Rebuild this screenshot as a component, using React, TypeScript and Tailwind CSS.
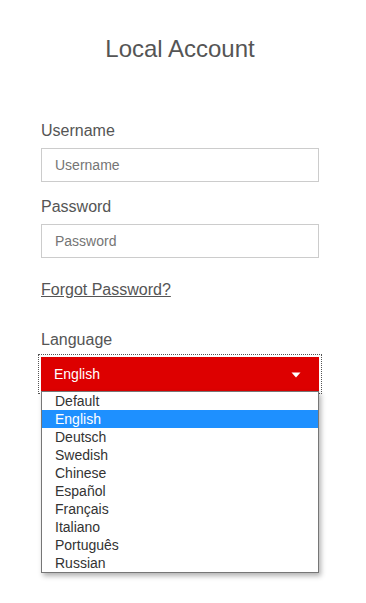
import { useState } from 'react'

const languages = ['Default', 'English', 'Deutsch', 'Swedish', 'Chinese', 'Español', 'Français', 'Italiano', 'Português', 'Russian']

export default function App() {
  const [selected, setSelected] = useState('English')

  return (
    <div className="min-h-[603px] w-full bg-white font-['Liberation_Sans',Arial,sans-serif] text-[#555]">
      <div className="ml-[41px] w-[278px] pt-[33px] pb-10">
        <h1 className="text-center text-[24px] leading-8 text-[#555]">Local Account</h1>

        <div className="mt-[54px]">
          <label className="block text-[16px] leading-6">Username</label>
          <input
            type="text"
            placeholder="Username"
            className="mt-[5px] block h-[34px] w-full border border-[#ccc] px-[13px] text-[14px] text-[#555] placeholder:text-[#757575] outline-none"
          />
        </div>

        <div className="mt-[13px]">
          <label className="block text-[16px] leading-6">Password</label>
          <input
            type="password"
            placeholder="Password"
            className="mt-[5px] block h-[34px] w-full border border-[#ccc] px-[13px] text-[14px] text-[#555] placeholder:text-[#757575] outline-none"
          />
        </div>

        <a href="#" className="mt-5 inline-block text-[16px] leading-6 text-[#555] underline">
          Forgot Password?
        </a>

        <div className="mt-[26px]">
          <label className="block text-[16px] leading-6">Language</label>
          <div className="relative mt-[5px]">
            <div className="flex h-[34px] items-center justify-between bg-[#dd0000] pl-[13px] pr-[18px] text-[14px] text-white outline-1 outline-offset-2 outline-dotted outline-[#555]">
              <span>{selected}</span>
              <svg width="10" height="6" viewBox="0 0 10 6" className="mt-[2px]">
                <path d="M0.5 0.5 L9.5 0.5 L5 5.5 Z" fill="#fff" />
              </svg>
            </div>

            <ul className="absolute left-0 top-full z-10 w-full border border-[#767676] bg-white shadow-[2px_3px_5px_rgba(0,0,0,0.3)]">
              {languages.map((lang) => (
                <li
                  key={lang}
                  onClick={() => setSelected(lang)}
                  className={
                    lang === selected
                      ? 'h-[18px] bg-[#1e90ff] pl-[13px] text-[14px] leading-[18px] text-white'
                      : 'h-[18px] pl-[13px] text-[14px] leading-[18px] text-[#333]'
                  }
                >
                  {lang}
                </li>
              ))}
            </ul>
          </div>
        </div>
      </div>
    </div>
  )
}
